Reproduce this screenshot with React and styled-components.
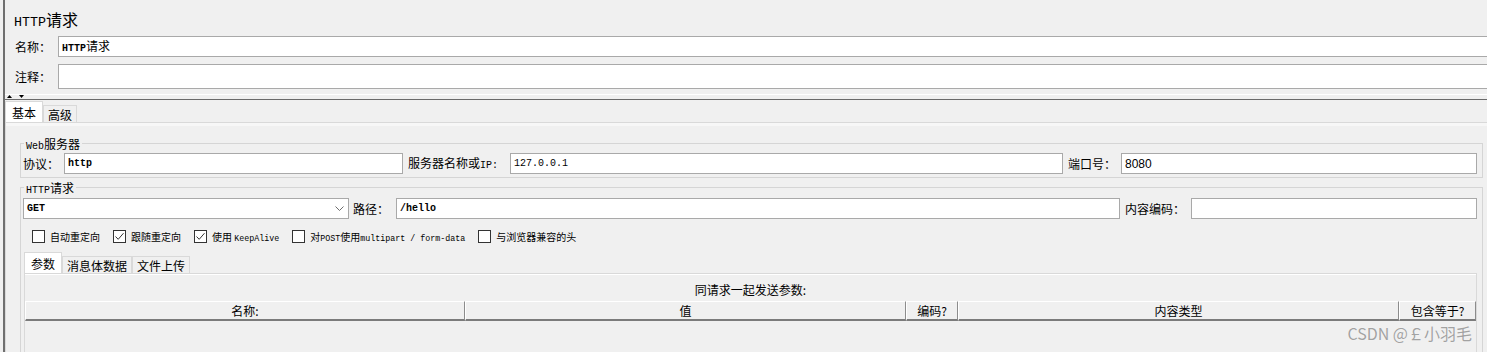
import React from 'react'
import styled, { createGlobalStyle } from 'styled-components'

const GlobalStyle = createGlobalStyle`
  html, body { margin: 0; padding: 0; background: #f0f0f0; }
  body {
    font-family: "Noto Sans CJK SC", "Liberation Sans", sans-serif;
    font-size: 12px;
    color: #000;
  }
  * { box-sizing: border-box; }
`

const Page = styled.div`
  position: relative;
  width: 1487px;
  height: 352px;
  overflow: hidden;
  padding-left: 3px;
  background: #f0f0f0;
`
const Frame = styled.div`
  height: 100%;
  display: flex;
  flex-direction: column;
  border-left: 2px solid #6f6f6f;
  & > * { flex-shrink: 0; }
`
const Header = styled.div`
  padding: 9px 0 0 9px;
`
const Title = styled.div`
  font-size: 16px;
  line-height: 20px;
  height: 20px;
`
const Lat = styled.span`
  font-family: "Liberation Mono", monospace;
  font-size: 0.833em;
  line-height: 1;
  font-weight: ${p => (p.$b ? 700 : 400)};
`
const TopRow = styled.div`
  display: flex;
  align-items: center;
  margin: 7px -4px 0 1px;
`
const Label = styled.div`
  flex: none;
  width: ${p => (p.$w ? `${p.$w}px` : 'auto')};
  padding-left: ${p => p.$pl || 0}px;
  font-size: 12px;
  line-height: 14px;
  white-space: nowrap;
`
const TextBox = styled.div`
  flex: 1;
  min-width: 0;
  height: ${p => p.$h || 21}px;
  display: flex;
  align-items: center;
  padding-left: 3px;
  background: #fff;
  border: 1px solid #a9a9a9;
  font-size: 12px;
  line-height: 14px;
  white-space: nowrap;
  overflow: hidden;
  ${p => p.$sans && 'font-family: "Liberation Sans", Arial, sans-serif;'}
`
const Splitter = styled.div`
  height: 11px;
  display: flex;
  align-items: flex-end;
  gap: 7px;
  padding: 0 0 1px 2px;
  border-bottom: 1px solid #6a6a6a;
  box-shadow: inset 0 -4px 0 #f0f0f0, inset 0 -5px 0 #fff;
`
const TabStrip = styled.div`
  display: flex;
  align-items: flex-end;
  height: ${p => p.$h || 22}px;
  margin-left: ${p => p.$ml || 0}px;
`
const Tab = styled.div`
  height: ${p => (p.$active ? 21 : 17)}px;
  padding: 0 ${p => (p.$active ? 6 : 4)}px;
  display: flex;
  align-items: center;
  background: ${p => (p.$active ? '#fff' : '#f0f0f0')};
  border: 1px solid #d9d9d9;
  border-bottom: none;
  font-size: 12px;
  white-space: nowrap;
`
const Panel = styled.div`
  flex: 1 1 0;
  min-height: 0;
  padding: 14px 4px 0 14px;
  border-top: 1px solid #d9d9d9;
  border-left: 1px solid #d9d9d9;
  box-shadow: inset 0 3px 0 #f7f7f7;
`
const Group = styled.fieldset`
  margin: ${p => p.$mt || 0}px 0 0;
  padding: ${p => p.$pt}px 5px ${p => p.$pb || 0}px 2px;
  border: 1px solid #d5d5d5;
  min-width: 0;
  ${p => p.$fill && 'height: 200px;'}
`
const Legend = styled.legend`
  margin-left: 1px;
  padding: 0 2px;
  font-size: 12px;
  line-height: 13px;
  height: 13px;
`
const FieldRow = styled.div`
  display: grid;
  grid-template-columns: ${p => p.$cols};
  align-items: center;
  height: 21px;
`
const Select = styled.div`
  height: 21px;
  display: flex;
  align-items: center;
  justify-content: space-between;
  padding: 0 4px 0 3px;
  background: #fff;
  border: 1px solid #a9a9a9;
  font-size: 12px;
`
const CheckRow = styled.div`
  display: flex;
  align-items: center;
  height: 13px;
  margin-top: 11px;
  padding-left: 9px;
`
const CheckItem = styled.label`
  display: flex;
  align-items: center;
  gap: 5px;
  margin-right: 13px;
  font-size: 10px;
  line-height: 13px;
  white-space: nowrap;
`
const Box = styled.span`
  flex: none;
  width: 13px;
  height: 13px;
  display: flex;
  align-items: center;
  justify-content: center;
  background: #fff;
  border: 1px solid #333;
`
const SubTabs = styled.div`
  margin-top: 9px;
`
const SubPanel = styled.div`
  height: 90px;
  margin-left: 1px;
  border: 1px solid #d9d9d9;
  border-bottom: none;
  box-shadow: inset 0 1px 0 #fff;
`
const Caption = styled.div`
  margin-top: 9px;
  text-align: center;
  font-size: 12px;
  line-height: 14px;
`
const TableHead = styled.div`
  display: grid;
  grid-template-columns: 440px 441px 52px 441px 1fr;
  margin-top: 4px;
`
const HeadCell = styled.div`
  height: 20px;
  display: flex;
  align-items: center;
  justify-content: center;
  background: #f0f0f0;
  border-top: 1px solid #fff;
  border-left: 1px solid #fff;
  border-right: 1px solid #8c8c8c;
  border-bottom: 2px solid #7b7b7b;
  font-size: 12px;
  white-space: nowrap;
`
const Watermark = styled.div`
  position: absolute;
  right: 15px;
  top: 323px;
  font-family: "Noto Sans CJK SC", "Liberation Sans", sans-serif;
  font-size: 16px;
  line-height: 20px;
  color: #a2a2a2;
  text-shadow: 0 0 1px #fff;
`

const Arrow = ({ up }) => (
  <svg width="5" height="3" viewBox="0 0 5 3">
    <path d={up ? 'M0 3 L2.5 0 L5 3 Z' : 'M0 0 L5 0 L2.5 3 Z'} fill="#000" />
  </svg>
)

const Check = () => (
  <svg width="11" height="11" viewBox="0 0 11 11">
    <path d="M1.5 5.5 L4.2 8.3 L9.5 2.2" fill="none" stroke="#333" strokeWidth="1" />
  </svg>
)

const Chevron = () => (
  <svg width="9" height="5" viewBox="0 0 9 5">
    <path d="M0.5 0.5 L4.5 4.5 L8.5 0.5" fill="none" stroke="#6d6d6d" strokeWidth="1" />
  </svg>
)

const options = [
  { label: '自动重定向', checked: false },
  { label: '跟随重定向', checked: true },
  { label: <>使用 <Lat>KeepAlive</Lat></>, checked: true },
  { label: <>对<Lat>POST</Lat>使用<Lat>multipart / form-data</Lat></>, checked: false },
  { label: '与浏览器兼容的头', checked: false },
]

const columns = ['名称:', '值', '编码?', '内容类型', '包含等于?']

const App = () => {
  return (
    <Page>
      <GlobalStyle />
      <Frame>
        <Header>
          <Title><Lat>HTTP</Lat>请求</Title>
          <TopRow>
            <Label $w={43}>名称：</Label>
            <TextBox><span><Lat $b>HTTP</Lat>请求</span></TextBox>
          </TopRow>
          <TopRow>
            <Label $w={43}>注释：</Label>
            <TextBox $h={25} />
          </TopRow>
        </Header>
        <Splitter>
          <Arrow up />
          <Arrow />
        </Splitter>
        <TabStrip>
          <Tab $active>基本</Tab>
          <Tab>高级</Tab>
        </TabStrip>
        <Panel>
          <Group $pt={3} $pb={3}>
            <Legend><Lat>Web</Lat>服务器</Legend>
            <FieldRow $cols="41px 339px 107px 553px 58px 1fr">
              <Label>协议：</Label>
              <TextBox><Lat $b>http</Lat></TextBox>
              <Label $pl={5}>服务器名称或<Lat>IP:</Lat></Label>
              <TextBox><Lat>127.0.0.1</Lat></TextBox>
              <Label $pl={5}>端口号：</Label>
              <TextBox $sans>8080</TextBox>
            </FieldRow>
          </Group>
          <Group $mt={3} $pt={4} $fill>
            <Legend><Lat>HTTP</Lat>请求</Legend>
            <FieldRow $cols="326px 47px 724px 71px 1fr">
              <Select><Lat $b>GET</Lat><Chevron /></Select>
              <Label $pl={4}>路径：</Label>
              <TextBox><Lat $b>/hello</Lat></TextBox>
              <Label $pl={5}>内容编码：</Label>
              <TextBox />
            </FieldRow>
            <CheckRow>
              {options.map((o, i) => (
                <CheckItem key={i}>
                  <Box>{o.checked && <Check />}</Box>
                  <span>{o.label}</span>
                </CheckItem>
              ))}
            </CheckRow>
            <SubTabs>
              <TabStrip $h={21} $ml={1}>
                <Tab $active>参数</Tab>
                <Tab>消息体数据</Tab>
                <Tab>文件上传</Tab>
              </TabStrip>
              <SubPanel>
                <Caption>同请求一起发送参数:</Caption>
                <TableHead>
                  {columns.map(c => (
                    <HeadCell key={c}>{c}</HeadCell>
                  ))}
                </TableHead>
              </SubPanel>
            </SubTabs>
          </Group>
        </Panel>
      </Frame>
      <Watermark>CSDN @￡小羽毛</Watermark>
    </Page>
  )
}

export default App
